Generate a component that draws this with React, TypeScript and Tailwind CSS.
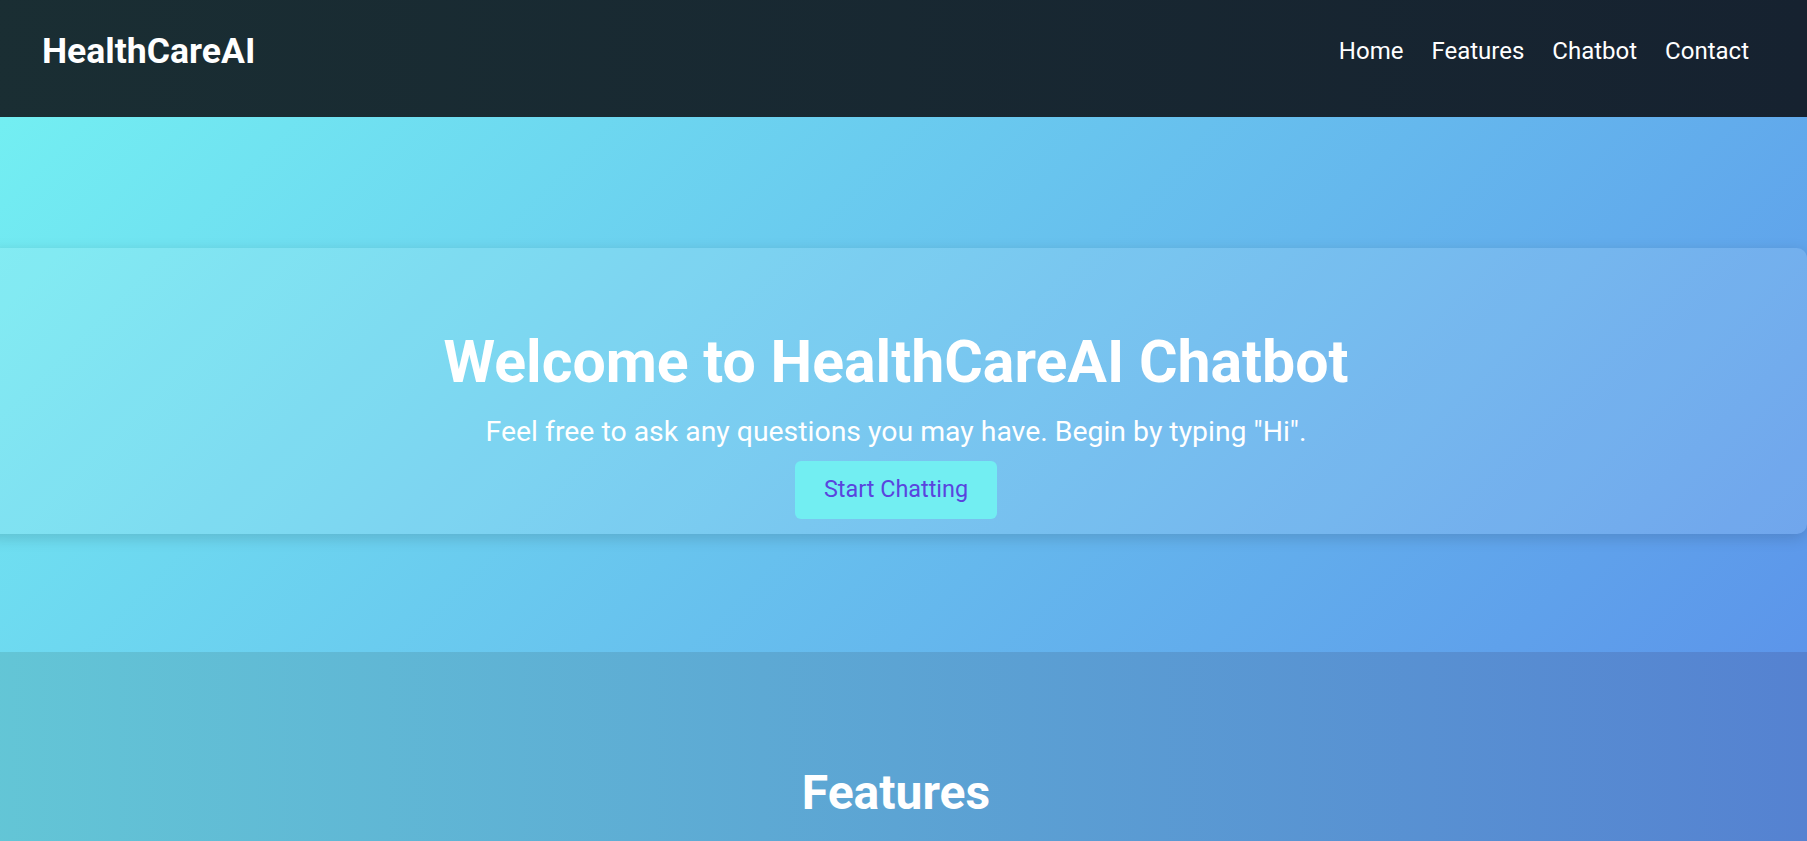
import React from "react";

export default function App() {
  return (
    <div className="w-full overflow-hidden font-['Roboto','Liberation_Sans',sans-serif]">
      <div className="ml-[-15px] w-[calc(100%+15px)]">
        <header className="flex h-[117px] items-center justify-between bg-[linear-gradient(90deg,#1a2e33,#162230)] pb-[16px] pl-[57px] pr-[58px] text-white">
          <div className="text-[35.6px] font-bold leading-[42px]">HealthCareAI</div>
          <nav className="flex gap-[28px] text-[24px] leading-[28px]">
            <a href="#">Home</a>
            <a href="#">Features</a>
            <a href="#">Chatbot</a>
            <a href="#">Contact</a>
          </nav>
        </header>

        <section className="bg-[linear-gradient(135deg,#73eff2,#5c95ea)] pb-[118px] pt-[131px]">
          <div className="flex flex-col items-center rounded-[10px] bg-white/[0.12] pb-[15px] pt-[79px] text-white shadow-[0_4px_15px_rgba(0,0,0,0.15)]">
            <h1 className="text-[59px] font-bold leading-[70px]">Welcome to HealthCareAI Chatbot</h1>
            <p className="mt-[17px] text-[28.4px] leading-[36px]">
              Feel free to ask any questions you may have. Begin by typing "Hi".
            </p>
            <button className="mt-[11px] h-[58px] rounded-[6px] bg-[#72eef2] px-[29px] text-[23.4px] text-[#5a44de]">
              Start Chatting
            </button>
          </div>
        </section>

        <section className="h-[400px] bg-[linear-gradient(90deg,#63c6d6,#5582d1)] pt-[112px] text-center text-white">
          <h2 className="text-[48px] font-bold leading-[58px]">Features</h2>
        </section>
      </div>
    </div>
  );
}
